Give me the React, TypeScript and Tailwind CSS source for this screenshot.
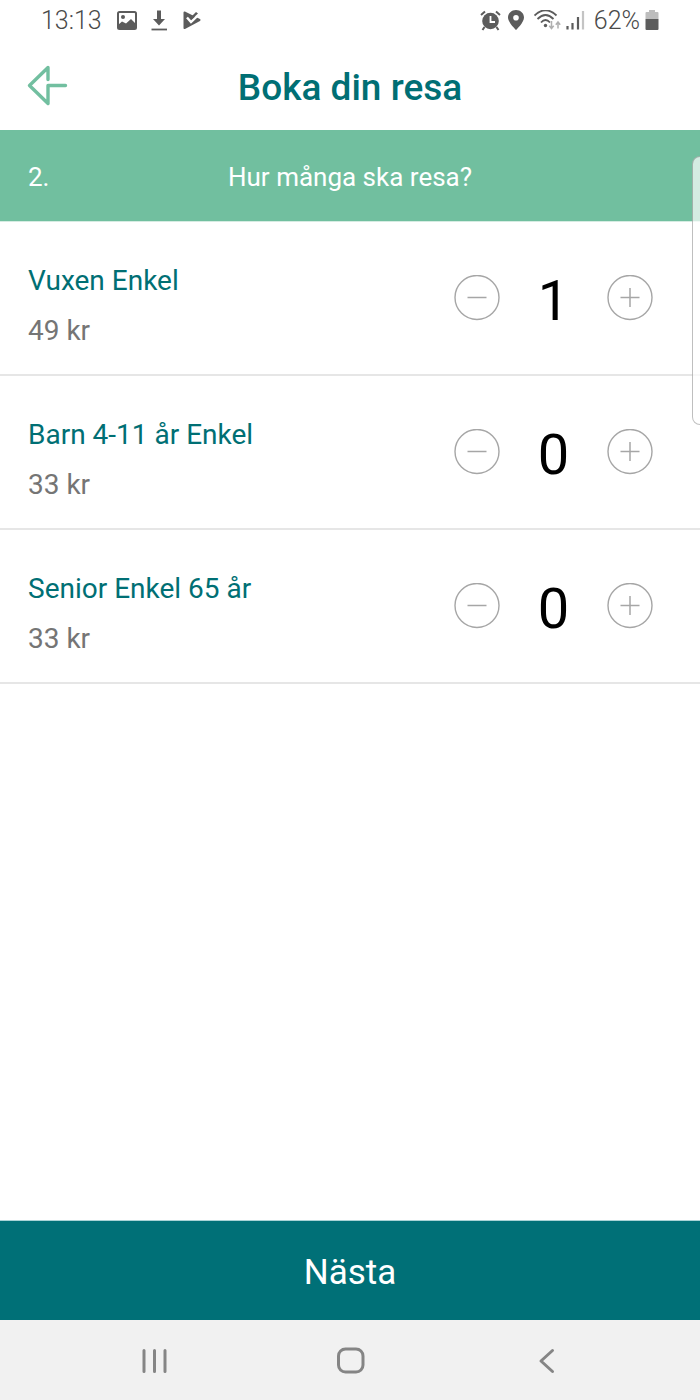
import { useState } from "react";

const tickets = [
  { id: "adult", name: "Vuxen Enkel", price: 49, initial: 1 },
  { id: "child", name: "Barn 4-11 år Enkel", price: 33, initial: 0 },
  { id: "senior", name: "Senior Enkel 65 år", price: 33, initial: 0 },
];

function StatusBar() {
  return (
    <div className="flex h-[42px] items-center justify-between pl-[41px] pr-10 text-[25px] font-light text-[#4a4a4a]">
      <div className="flex items-center">
        <span>13:13</span>

        {/* Picture */}
        <svg className="ml-3.5 shrink-0" width="22" height="22" viewBox="0 0 22 22" aria-hidden="true">
          <rect x="2" y="2" width="18" height="17" rx="1.5" fill="none" stroke="#5c5c5c" strokeWidth="2" />
          <circle cx="7" cy="7" r="2" fill="#5c5c5c" />
          <path d="M2 15l4-3.500 4 2 5-4.500 5 5v5H2z" fill="#5c5c5c" />
        </svg>

        {/* Download */}
        <svg className="ml-3 shrink-0" width="18" height="22" viewBox="0 0 18 22" aria-hidden="true">
          <path d="M7 0.500h4v8.500h4l-6 6.500L3 9h4z" fill="#5c5c5c" />
          <path d="M1.500 19.500h15.500" stroke="#5c5c5c" strokeWidth="1.800" />
        </svg>

        {/* Play with tick */}
        <svg className="ml-3.5 shrink-0" width="20" height="22" viewBox="0 0 20 22" aria-hidden="true">
          <path d="M2.500 2.500L17.500 10 2.500 18z" fill="#5c5c5c" stroke="#5c5c5c" strokeWidth="2" strokeLinejoin="round" />
          <path d="M5 7.500l4 4.500L18 3.500" fill="none" stroke="#fff" strokeWidth="2.400" />
          <path d="M9 7l5-5 2 1.500L9.500 9.500z" fill="#5c5c5c" />
        </svg>
      </div>

      <div className="flex items-center">
        {/* Alarm */}
        <svg className="shrink-0" width="22" height="22" viewBox="0 0 22 22" aria-hidden="true">
          <circle cx="10.500" cy="11" r="8.300" fill="#5c5c5c" />
          <path d="M1 5L5 1.500M20 5L16 1.500M4.500 17l-2 3M16.500 17l2 3" stroke="#5c5c5c" strokeWidth="2" />
          <path d="M10.500 6v6h4.500" fill="none" stroke="#fff" strokeWidth="1.800" />
        </svg>

        {/* Location pin */}
        <svg className="ml-1 shrink-0" width="20" height="22" viewBox="0 0 20 22" aria-hidden="true">
          <path
            fillRule="evenodd"
            d="M10 0C5.500 0 2 3.300 2 7.500 2 12.500 10 20 10 20s8-7.500 8-12.500C18 3.300 14.500 0 10 0zm0 5a2.800 2.800 0 1 1 0 5.600A2.800 2.800 0 0 1 10 5z"
            fill="#5c5c5c"
          />
        </svg>

        {/* Wi-Fi with traffic arrows */}
        <svg className="ml-2 shrink-0" width="28" height="22" viewBox="0 0 28 22" aria-hidden="true">
          <g fill="none" stroke="#5c5c5c" strokeWidth="1.800">
            <path d="M0.500 5.500Q11.500-5 22.500 5.500" />
            <path d="M3.500 9Q11.500 1 19.500 9" />
            <path d="M7 12.500Q11.500 7.500 16 12.500" />
          </g>
          <circle cx="11.500" cy="15.500" r="1.700" fill="#5c5c5c" />
          <path d="M17.500 11v7M15.300 15.800l2.200 2.700 2.200-2.700M24 18.500v-6M21.800 14.700l2.200-2.700 2.200 2.700" fill="none" stroke="#b0b0b0" strokeWidth="1.500" />
        </svg>

        {/* Signal */}
        <svg className="ml-1 shrink-0" width="20" height="22" viewBox="0 0 20 22" aria-hidden="true">
          <path d="M1.500 16v3.500M6.500 13v6.500M12 7v12.500" stroke="#5c5c5c" strokeWidth="2.200" />
          <path d="M17 1v18.500" stroke="#c4c4c4" strokeWidth="2.200" />
        </svg>

        <span className="ml-2">62%</span>

        {/* Battery */}
        <svg className="ml-1 shrink-0" width="16" height="22" viewBox="0 0 16 22" aria-hidden="true">
          <path d="M5 0h6v2h2.500q1 0 1 1v6h-13V3q0-1 1-1H5z" fill="#bdbdbd" />
          <path d="M1.500 9h13v10q0 1-1 1h-11q-1 0-1-1z" fill="#5c5c5c" />
        </svg>
      </div>
    </div>
  );
}

type StepButtonProps = {
  label: string;
  plus?: boolean;
  onClick: () => void;
};

function StepButton({ label, plus, onClick }: StepButtonProps) {
  return (
    <button type="button" aria-label={label} onClick={onClick} className="shrink-0 cursor-pointer">
      <svg className="block" width="46" height="46" viewBox="0 0 46 46" fill="none" stroke="#a6a6a6">
        <circle cx="23" cy="22.500" r="22" strokeWidth="1.400" />
        <path d={plus ? "M13.500 22.500h19M23 13v19" : "M13.500 22.500h19"} strokeWidth="1.500" />
      </svg>
    </button>
  );
}

export default function App() {
  const [counts, setCounts] = useState(tickets.map((ticket) => ticket.initial));

  const change = (index: number, step: number) => {
    setCounts((prev) => prev.map((n, i) => (i === index ? Math.max(0, n + step) : n)));
  };

  return (
    <div className="relative flex min-h-screen flex-col bg-white font-[Roboto,sans-serif]">
      <StatusBar />

      {/* Header */}
      <header className="grid h-[88px] grid-cols-[1fr_auto_1fr] items-center px-6">
        <button type="button" aria-label="Tillbaka" className="cursor-pointer justify-self-start">
          <svg width="48" height="48" viewBox="0 0 48 48" fill="none" stroke="#72bfa0" strokeWidth="3.400" strokeLinecap="round" strokeLinejoin="round">
            <path d="M24 17.500V5.500L5.500 23.500l18.500 18V23.500H41.500" />
          </svg>
        </button>
        <h1 className="pt-1 text-[37px] font-medium text-[#006f74]">Boka din resa</h1>
      </header>

      {/* Step */}
      <div className="grid h-[92px] grid-cols-[1fr_auto_1fr] items-center border-b border-[#d5ece2] bg-[#71bf9f] px-7 pt-1 text-[26px] text-white">
        <span>2.</span>
        <h2>Hur många ska resa?</h2>
      </div>

      {/* Tickets */}
      <ul className="flex-1">
        {tickets.map((ticket, i) => (
          <li key={ticket.id} className="flex items-center justify-between border-b-2 border-[#e6e6e6] py-[18px] pl-7 pr-[47px]">
            <div className="pt-4 text-[28px] leading-[50px]">
              <h3 className="text-[#006f74]">{ticket.name}</h3>
              <p className="text-[#757575]">{ticket.price} kr</p>
            </div>
            <div className="flex items-center">
              <StepButton label={`Minska ${ticket.name}`} onClick={() => change(i, -1)} />
              <output className="w-[107px] pt-1.5 text-center text-[56px] leading-[64px] text-black">{counts[i]}</output>
              <StepButton label={`Öka ${ticket.name}`} plus onClick={() => change(i, 1)} />
            </div>
          </li>
        ))}
      </ul>

      <button type="button" className="h-[100px] w-full cursor-pointer border-t border-[#a8d3d6] bg-[#007077] pt-1.5 text-[35px] text-white">
        Nästa
      </button>

      {/* System navigation */}
      <nav className="flex h-20 items-center justify-around bg-[#f1f1f1] px-[57px]">
        <button type="button" aria-label="Senaste appar" className="cursor-pointer">
          <svg width="32" height="32" viewBox="0 0 32 32" stroke="#858585" strokeWidth="3" strokeLinecap="round">
            <path d="M5 6.500v21M15.500 6.500v21M26 6.500v21" />
          </svg>
        </button>
        <button type="button" aria-label="Hem" className="cursor-pointer">
          <svg width="32" height="32" viewBox="0 0 32 32" fill="none" stroke="#858585" strokeWidth="3">
            <rect x="4.500" y="5" width="24.500" height="23" rx="7" />
          </svg>
        </button>
        <button type="button" aria-label="Bakåt" className="cursor-pointer">
          <svg width="32" height="32" viewBox="0 0 32 32" fill="none" stroke="#858585" strokeWidth="3" strokeLinecap="round" strokeLinejoin="round">
            <path d="M23.500 6.500L12 17 23.500 27.500" />
          </svg>
        </button>
      </nav>

      {/* Edge panel handle */}
      <div className="absolute right-0 top-[156px] h-[269px] w-2 rounded-l-lg border border-r-0 border-black/25 bg-white/70" />
    </div>
  );
}
